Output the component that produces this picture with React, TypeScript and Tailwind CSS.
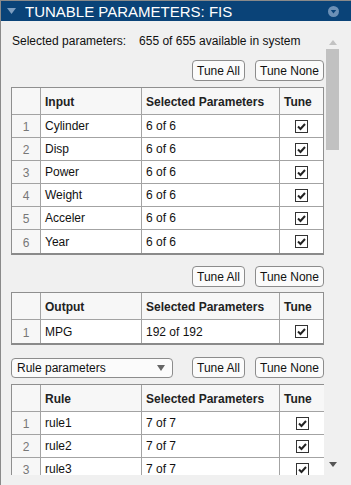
import { Fragment } from 'react';

type Row = { name: string; sel: string };

const inputs: Row[] = [
  { name: 'Cylinder', sel: '6 of 6' },
  { name: 'Disp', sel: '6 of 6' },
  { name: 'Power', sel: '6 of 6' },
  { name: 'Weight', sel: '6 of 6' },
  { name: 'Acceler', sel: '6 of 6' },
  { name: 'Year', sel: '6 of 6' },
];

const outputs: Row[] = [{ name: 'MPG', sel: '192 of 192' }];

const rules: Row[] = [
  { name: 'rule1', sel: '7 of 7' },
  { name: 'rule2', sel: '7 of 7' },
  { name: 'rule3', sel: '7 of 7' },
];

function Check() {
  return (
    <div className="flex h-[13px] w-[13px] items-center justify-center border border-[#333] bg-white">
      <svg width="11" height="11" viewBox="0 0 11 11">
        <path d="M2 5.5 L4.5 8 L9 3" fill="none" stroke="#222" strokeWidth="2" />
      </svg>
    </div>
  );
}

function Btn({ label, w }: { label: string; w: string }) {
  return (
    <div
      className={`flex h-[21px] items-center justify-center rounded-[4px] border border-[#8c8c8c] bg-[#fbfbfb] text-[12px] text-[#111] ${w}`}
    >
      {label}
    </div>
  );
}

function ParamTable({ title, rows, open }: { title: string; rows: Row[]; open?: boolean }) {
  return (
    <div
      className={`border-l border-t border-[#8f8f8f] ${open ? '' : 'border-r border-b-2 border-b-[#8a8a8a]'}`}
    >
      <div className="flex h-[27px] border-b border-[#a3a3a3] bg-[#f7f7f7] text-[12px] font-bold text-[#222]">
        <div className="w-[29px] border-r border-[#a3a3a3]" />
        <div className="flex w-[101px] items-center border-r border-[#a3a3a3] pl-[4px] pt-[2px]">{title}</div>
        <div className="flex w-[138px] items-center border-r border-[#a3a3a3] pl-[4px] pt-[2px]">Selected Parameters</div>
        <div className="flex flex-1 items-center pl-[4px] pt-[2px]">Tune</div>
      </div>
      {rows.map((r, i) => (
        <Fragment key={r.name}>
          <div
            className={`flex h-[23px] text-[12px] text-[#111] ${i < rows.length - 1 || open ? 'border-b border-[#a3a3a3]' : ''}`}
          >
            <div className="flex w-[29px] items-center justify-center border-r border-[#a3a3a3] bg-[#f7f7f7] pt-[2px] text-[#777]">
              {i + 1}
            </div>
            <div className="flex w-[101px] items-center border-r border-[#a3a3a3] bg-white pl-[4px]">{r.name}</div>
            <div className="flex w-[138px] items-center border-r border-[#a3a3a3] bg-white pl-[4px]">{r.sel}</div>
            <div className="flex flex-1 items-center justify-center bg-white">
              <Check />
            </div>
          </div>
        </Fragment>
      ))}
    </div>
  );
}

export default function App() {
  return (
    <div
      className="h-[485px] w-[351px] overflow-hidden border-l border-t border-[#8a8a8a] bg-[#f0f0f0]"
      style={{ fontFamily: '"Liberation Sans", Arial, sans-serif' }}
    >
      <div className="flex h-[20px] items-center bg-[#0a4378] text-white">
        <svg width="10" height="8" viewBox="0 0 10 8" className="ml-[6px]">
          <path d="M0 1 L9 1 L4.5 7 Z" fill="#7d9ec0" />
        </svg>
        <span className="ml-[8px] text-[15px] leading-none">TUNABLE PARAMETERS: FIS</span>
        <svg width="11" height="11" viewBox="0 0 11 11" className="ml-auto mr-[12px]">
          <circle cx="5.5" cy="5.5" r="5.5" fill="#6c90b6" />
          <path d="M2.8 4 L8.2 4 L5.5 7.6 Z" fill="#0a4378" />
        </svg>
      </div>
      <div className="flex">
        <div className="h-[454px] w-[323px] overflow-hidden pl-[10px]">
          <div className="w-[313px]">
            <div className="flex pt-[13px] text-[12px] leading-[14px] text-[#111]">
              <span className="ml-[1px]">Selected parameters:</span>
              <span className="ml-[13px]">655 of 655 available in system</span>
            </div>
            <div className="mt-[12px] flex justify-end gap-[10px]">
              <Btn label="Tune All" w="w-[53px]" />
              <Btn label="Tune None" w="w-[69px]" />
            </div>
            <div className="mt-[6px]">
              <ParamTable title="Input" rows={inputs} />
            </div>
            <div className="mt-[11px] flex justify-end gap-[10px]">
              <Btn label="Tune All" w="w-[53px]" />
              <Btn label="Tune None" w="w-[69px]" />
            </div>
            <div className="mt-[5px]">
              <ParamTable title="Output" rows={outputs} />
            </div>
            <div className="mt-[12px] flex items-center">
              <div className="flex h-[20px] w-[162px] items-center rounded-[4px] border border-[#8c8c8c] bg-[#fbfbfb] pl-[5px] pr-[7px] text-[12px] text-[#111]">
                <span>Rule parameters</span>
                <svg width="8" height="6" viewBox="0 0 8 6" className="ml-auto">
                  <path d="M0 0 L8 0 L4 6 Z" fill="#666" />
                </svg>
              </div>
              <div className="ml-auto flex gap-[10px]">
                <Btn label="Tune All" w="w-[53px]" />
                <Btn label="Tune None" w="w-[69px]" />
              </div>
            </div>
            <div className="mt-[6px]">
              <ParamTable title="Rule" rows={rules} open />
            </div>
          </div>
        </div>
        <div className="ml-[2px] flex h-[454px] w-[13px] flex-col items-center">
          <svg width="8" height="5" viewBox="0 0 8 5" className="mt-[19px]">
            <path d="M0 5 L8 5 L4 0 Z" fill="#c2c2c2" />
          </svg>
          <div className="mt-[4px] h-[101px] w-[13px] bg-[#c1c1c1]" />
          <svg width="8" height="5" viewBox="0 0 8 5" className="mt-auto mb-[8px]">
            <path d="M0 0 L8 0 L4 5 Z" fill="#555" />
          </svg>
        </div>
      </div>
    </div>
  );
}
